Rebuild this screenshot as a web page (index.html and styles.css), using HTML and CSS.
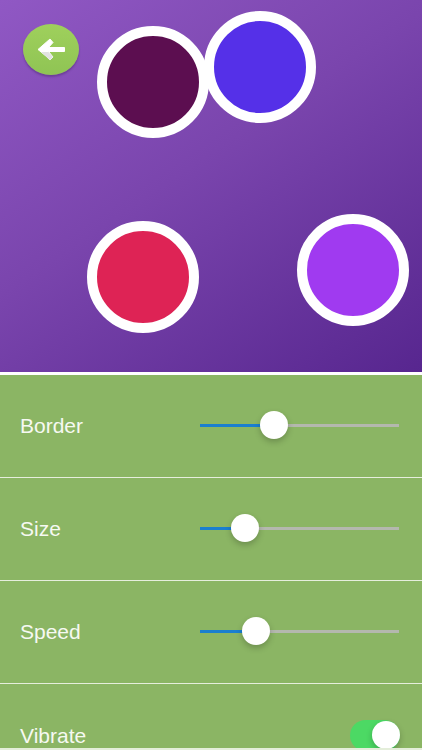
FILE: index.html
```html
<!DOCTYPE html>
<html lang="en">
<head>
<meta charset="utf-8">
<title>Settings</title>
<link rel="stylesheet" href="styles.css">
</head>
<body>
<main class="app">
  <section class="stage">
    <button class="back" aria-label="Back">
      <svg viewBox="0 0 30 25" width="30" height="25">
        <path class="arrow-face" d="M2 12.5 L14 2 L17 5.5 L12.5 10.5 H28.5 V14.5 H12.5 L17 20 L14 23 L10 19 Z"/>
        <path class="arrow-shade" d="M5 15 H12.5 L17 20 L14 23.2 Z"/>
      </svg>
    </button>
    <span class="ball ball-plum"></span>
    <span class="ball ball-indigo"></span>
    <span class="ball ball-red"></span>
    <span class="ball ball-violet"></span>
  </section>
  <section class="settings">
    <div class="row">
      <span class="label">Border</span>
      <div class="slider"><span class="fill" style="width:37.3%"></span><span class="thumb" style="left:37.3%"></span></div>
    </div>
    <div class="row">
      <span class="label">Size</span>
      <div class="slider"><span class="fill" style="width:22.6%"></span><span class="thumb" style="left:22.6%"></span></div>
    </div>
    <div class="row">
      <span class="label">Speed</span>
      <div class="slider"><span class="fill" style="width:28.1%"></span><span class="thumb" style="left:28.1%"></span></div>
    </div>
    <div class="row row-last">
      <span class="label">Vibrate</span>
      <div class="toggle"><span class="knob"></span></div>
    </div>
  </section>
</main>
</body>
</html>
```
FILE: styles.css
```css
* { box-sizing: border-box; }
html, body { margin: 0; padding: 0; }
body { width: 422px; height: 750px; overflow: hidden; background: #fff; font-family: "Liberation Sans", Arial, sans-serif; }
.app { display: flex; flex-direction: column; width: 422px; height: 750px; overflow: hidden; background: #fff; }
.stage { position: relative; flex: 0 0 372px; background: linear-gradient(146deg, #9058c4 0%, #7a45ad 45%, #57268f 100%); }
.back { position: absolute; left: 23px; top: 24px; width: 56px; height: 51px; padding: 0; border: 0; border-radius: 50%; display: flex; align-items: center; justify-content: center; background: linear-gradient(180deg, #9fd05c 0%, #8fc454 100%); box-shadow: 0 2px 2px rgba(60, 30, 90, .35); }
.arrow-face { fill: #fff; stroke: #fff; stroke-width: 1; stroke-linejoin: round; }
.arrow-shade { fill: #e2e2e2; }
.ball { position: absolute; width: 112px; height: 112px; border: 10px solid #fff; border-radius: 50%; }
.ball-plum { left: 97px; top: 26px; background: #5c0e50; }
.ball-indigo { left: 204px; top: 11px; background: #5530e8; }
.ball-red { left: 87px; top: 221px; background: #de2355; }
.ball-violet { left: 297px; top: 214px; background: #a03af0; }
.settings { margin-top: 3px; flex: 0 0 375px; overflow: hidden; background: #8bb564; border-bottom: 2px solid #e4eeda; }
.row { display: flex; align-items: center; justify-content: space-between; height: 103px; padding: 0 23px 0 20px; border-bottom: 1px solid #e6eedd; }
.row-last { border-bottom: 0; }
.label { color: #f6f9f2; font-size: 21px; line-height: 24px; }
.slider { position: relative; width: 199px; height: 3px; margin-top: -1px; background: #b4b8ae; }
.fill { display: block; height: 100%; background: #1a7fd0; }
.thumb { position: absolute; top: 1px; width: 28px; height: 28px; margin: -14px 0 0 -14px; border-radius: 50%; background: #fff; box-shadow: 0 3px 6px rgba(0, 0, 0, .22); }
.toggle { position: relative; width: 50px; height: 31px; margin-right: -1px; border-radius: 16px; background: #4cd964; }
.knob { position: absolute; right: 0; top: 1px; width: 28px; height: 28px; border-radius: 50%; background: #fff; box-shadow: 0 3px 6px rgba(0, 0, 0, .22); }
```
